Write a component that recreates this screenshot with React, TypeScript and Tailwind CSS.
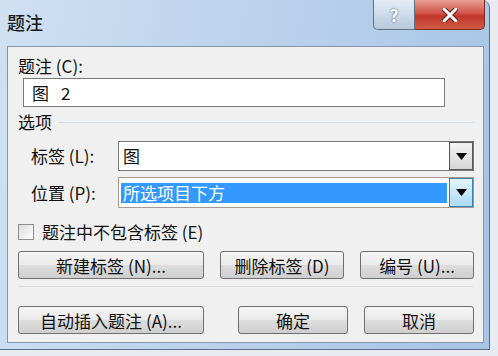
import React from 'react';

const font = { fontFamily: '"Noto Sans CJK SC", "Noto Sans", sans-serif' };

function Btn({ label, w, ml = 0 }: { label: string; w: number; ml?: number }) {
  return (
    <div
      className="flex h-[28px] items-center justify-center rounded-[3px] border border-[#707070] bg-[linear-gradient(#f4f4f4_0%,#ebebeb_48%,#dddddd_52%,#cfcfcf_100%)] text-[17px] leading-none text-[#111]"
      style={{ width: w, marginLeft: ml }}
    >
      {label}
    </div>
  );
}

function Arrow({ focused }: { focused?: boolean }) {
  return (
    <div
      className={`flex h-full w-[24px] items-center justify-center border ${
        focused
          ? 'border-[#3c7fb1] bg-[linear-gradient(#e5f4fc,#a9dbf6)]'
          : 'border-[#555] bg-[linear-gradient(#f2f2f2,#d6d6d6)]'
      }`}
    >
      <svg width="11" height="7" viewBox="0 0 11 7">
        <path d="M0 0 H11 L5.5 7 Z" fill="#000" />
      </svg>
    </div>
  );
}

export default function App() {
  return (
    <div className="h-[356px] w-[498px] overflow-hidden bg-[#e8ebef]" style={font}>
      <div className="flex h-[350px] w-[490px] flex-col rounded-tr-[8px] border-r border-b border-[#5b6f8a] bg-[linear-gradient(100deg,#cfe0f3_0%,#bcd3ec_45%,#a7c4e6_100%)]">
        {/* title bar */}
        <div className="flex h-[46px] items-start justify-between">
          <div className="pl-[7px] pt-[10px] text-[18px] font-medium leading-[24px] text-[#1b1b1b]">题注</div>
          <div className="mr-[4px] flex h-[30px]">
            <div className="flex w-[42px] items-center justify-center rounded-bl-[5px] border border-t-0 border-[#5f7187] bg-[linear-gradient(#e4edf6,#b6c8dc)] text-[17px] font-bold leading-none text-white [text-shadow:0_0_2px_#33475e]">
              ?
            </div>
            <div className="flex w-[70px] items-center justify-center rounded-br-[5px] border border-t-0 border-l-0 border-[#7a2a22] bg-[linear-gradient(#e8a093,#d2554a_45%,#c2362b_55%,#d05a46)]">
              <svg width="16" height="14" viewBox="0 0 16 14">
                <path d="M2 1 L14 13 M14 1 L2 13" stroke="#5a1f18" strokeWidth="5" strokeLinecap="round" />
                <path d="M2 1 L14 13 M14 1 L2 13" stroke="#fff" strokeWidth="3" strokeLinecap="round" />
              </svg>
            </div>
          </div>
        </div>

        {/* client area */}
        <div className="ml-[7px] flex h-[297px] w-[477px] flex-col border border-[#8596ab] bg-[#f0f0f0] text-[17px] leading-[20px] text-[#111]">
          <div className="ml-[10px] mt-[9px]">题注 (C):</div>
          <div className="ml-[15px] mt-[2px] flex h-[29px] w-[422px] items-center border border-[#7a7a7a] bg-white pl-[8px]">
            <span>图</span>
            <span className="ml-[12px]">2</span>
          </div>

          <div className="ml-[10px] mt-[5px] flex items-center">
            <span>选项</span>
            <div className="ml-[6px] mr-[8px] h-px flex-1 bg-[#d5dfe5]" />
          </div>

          <div className="mt-[9px] flex h-[30px] items-center">
            <span className="ml-[23px] w-[87px]">标签 (L):</span>
            <div className="flex h-full w-[356px] border border-[#7a7a7a] bg-white">
              <div className="flex flex-1 items-center pl-[4px]">图</div>
              <Arrow />
            </div>
          </div>

          <div className="mt-[6px] flex h-[31px] items-center">
            <span className="ml-[23px] w-[87px]">位置 (P):</span>
            <div className="flex h-full w-[356px] border border-[#a99a91] bg-white">
              <div className="flex flex-1 items-center px-[2px]">
                <div className="flex h-[20px] w-full items-center bg-[#3399ff] pl-[2px] text-white">所选项目下方</div>
              </div>
              <Arrow focused />
            </div>
          </div>

          <div className="ml-[10px] mt-[14px] flex items-center">
            <div className="h-[16px] w-[16px] border border-[#8e8f8f] bg-[linear-gradient(135deg,#dcdcdc,#ffffff)]" />
            <span className="ml-[8px]">题注中不包含标签 (E)</span>
          </div>

          <div className="ml-[10px] mt-[9px] flex">
            <Btn label="新建标签 (N)..." w={186} />
            <Btn label="删除标签 (D)" w={124} ml={16} />
            <Btn label="编号 (U)..." w={114} ml={16} />
          </div>

          <div className="ml-[10px] mr-[10px] mt-[7px] h-px bg-[#dcdcdc]" />

          <div className="ml-[10px] mt-[19px] flex">
            <Btn label="自动插入题注 (A)..." w={186} />
            <Btn label="确定" w={110} ml={34} />
            <Btn label="取消" w={110} ml={16} />
          </div>
        </div>
      </div>
    </div>
  );
}
